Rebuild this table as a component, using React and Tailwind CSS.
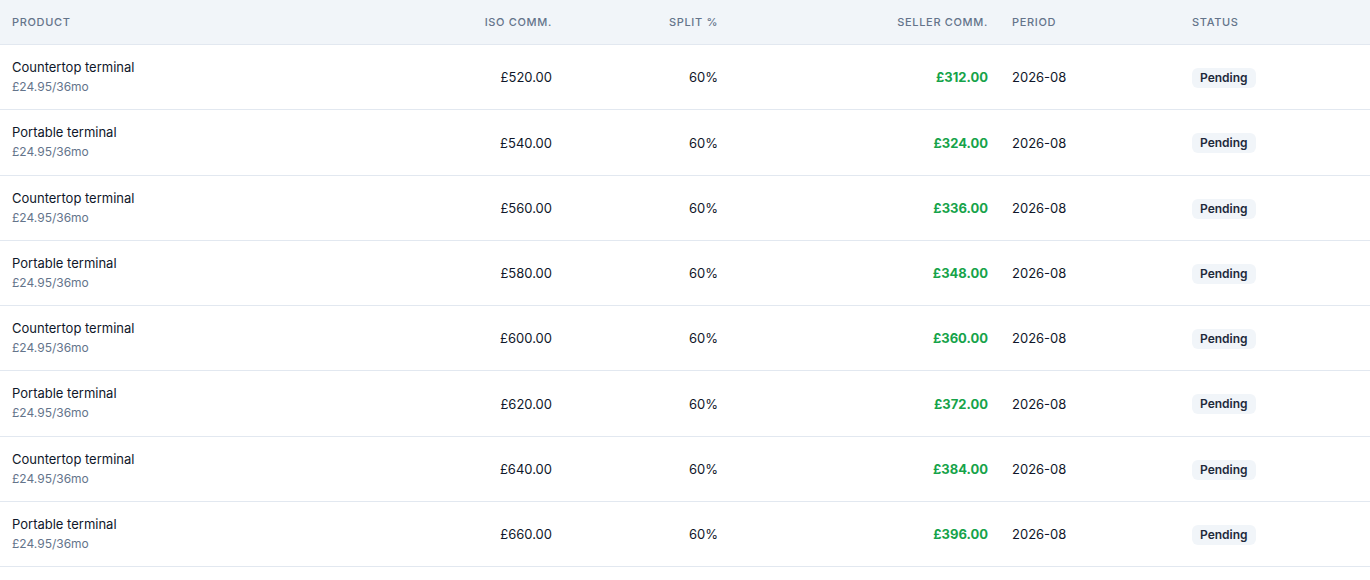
import React from "react";

const rows = [
  { product: "Countertop terminal", iso: "£520.00", seller: "£312.00" },
  { product: "Portable terminal", iso: "£540.00", seller: "£324.00" },
  { product: "Countertop terminal", iso: "£560.00", seller: "£336.00" },
  { product: "Portable terminal", iso: "£580.00", seller: "£348.00" },
  { product: "Countertop terminal", iso: "£600.00", seller: "£360.00" },
  { product: "Portable terminal", iso: "£620.00", seller: "£372.00" },
  { product: "Countertop terminal", iso: "£640.00", seller: "£384.00" },
  { product: "Portable terminal", iso: "£660.00", seller: "£396.00" },
];

const cols = "grid grid-cols-[400px_164px_166px_270px_180px_190px]";

const App = () => {
  return (
    <div
      className="w-[1370px] bg-white text-[#0f172a]"
      style={{ fontFamily: "Inter, 'Noto Sans', sans-serif" }}
    >
      {/* Header */}
      <div className={`${cols} h-[45px] items-center bg-[#f1f5f9] border-b border-[#e2e8f0] text-[11px] font-medium tracking-[0.06em] uppercase text-[#64748b]`}>
        <div className="px-3">Product</div>
        <div className="px-3 text-right">ISO Comm.</div>
        <div className="px-3 text-right">Split %</div>
        <div className="px-3 text-right">Seller Comm.</div>
        <div className="px-3">Period</div>
        <div className="px-3">Status</div>
      </div>

      {/* Rows */}
      {rows.map((row, index) => (
        <div
          key={index}
          className={`${cols} items-center border-b border-[#e2e8f0] py-[12.125px] text-[13px]`}
        >
          <div className="px-3">
            <div className="leading-5">{row.product}</div>
            <div className="leading-5 text-xs text-[#64748b]">£24.95/36mo</div>
          </div>
          <div className="px-3 pt-[2px] text-right">{row.iso}</div>
          <div className="px-3 pt-[2px] text-right">60%</div>
          <div className="px-3 pt-[2px] text-right font-bold text-[#16a34a]">{row.seller}</div>
          <div className="px-3 pt-[2px]">2026-08</div>
          <div className="px-3 pt-[2px]">
            <span className="inline-block rounded-md bg-[#f1f5f9] px-2 py-[2px] text-xs font-semibold text-[#1e293b]">
              Pending
            </span>
          </div>
        </div>
      ))}
    </div>
  );
};

export default App;
